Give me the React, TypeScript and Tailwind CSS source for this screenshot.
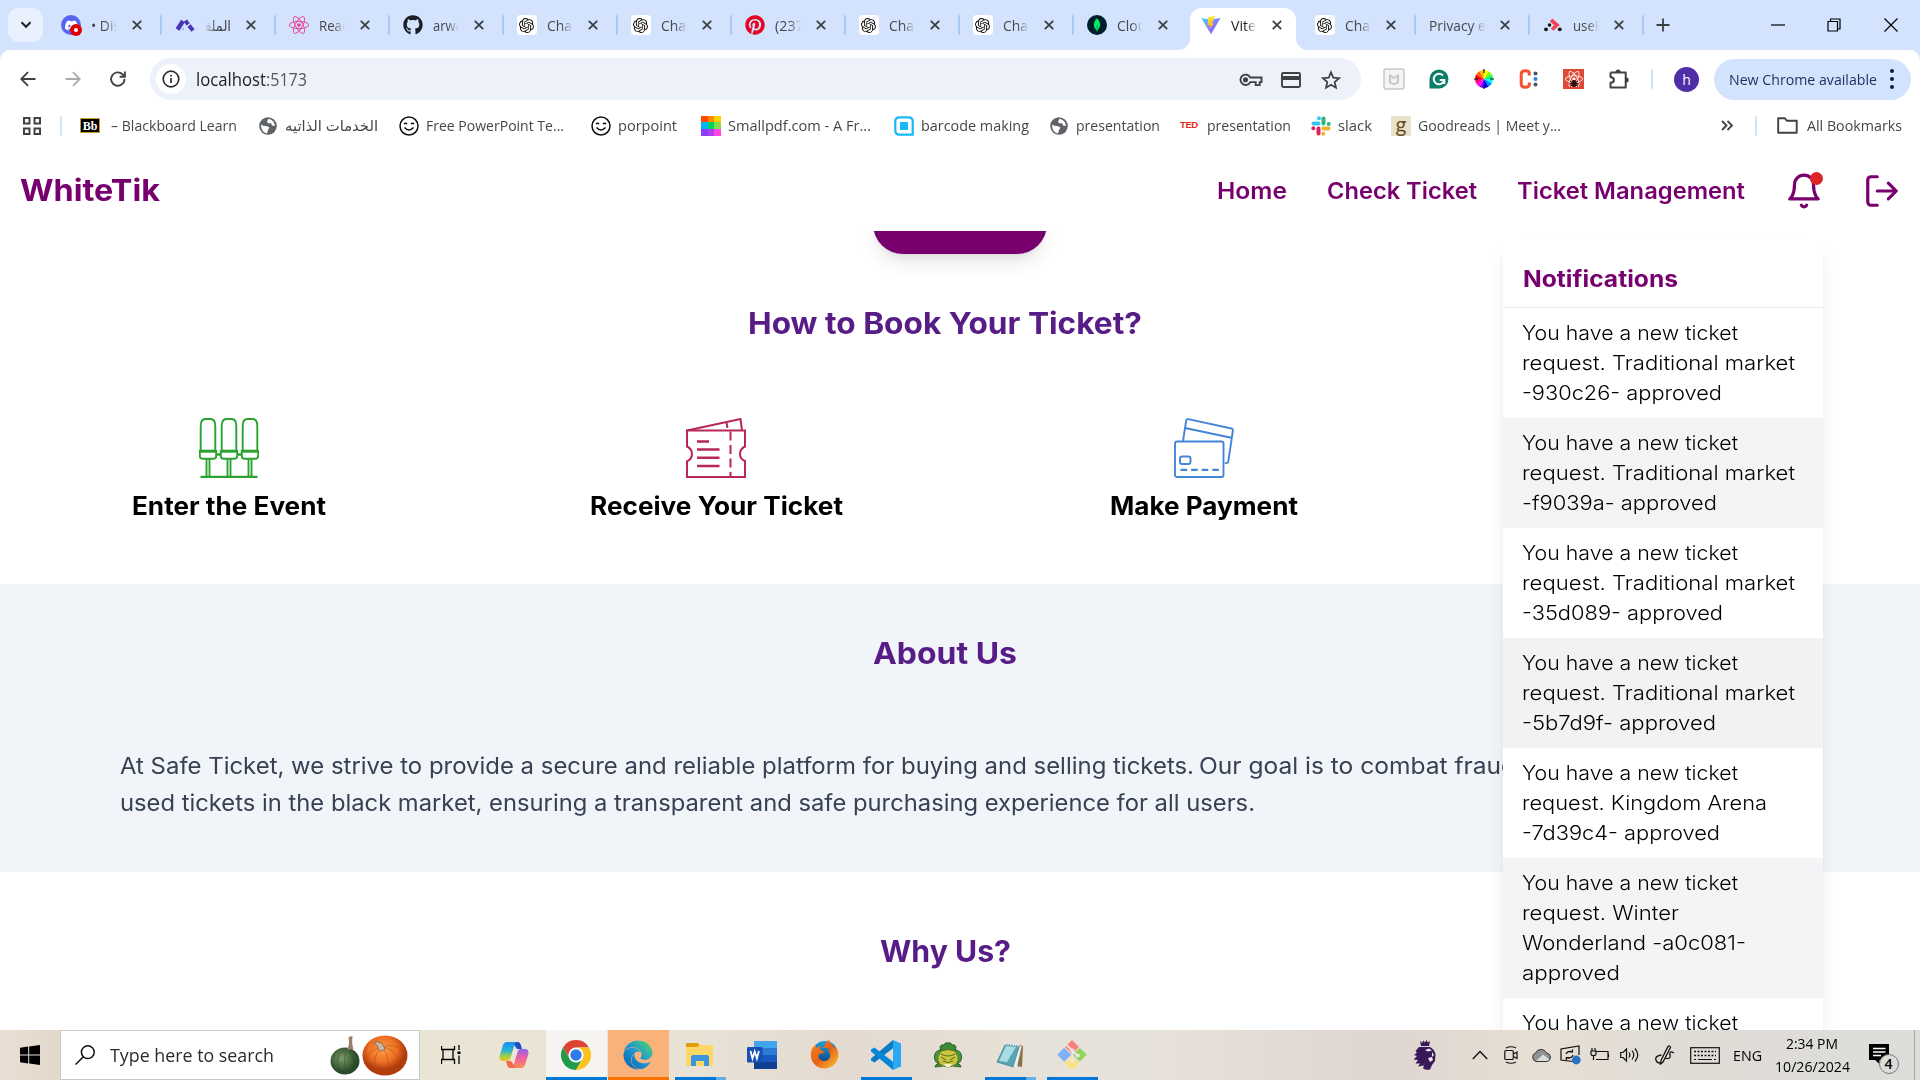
import { useLayoutEffect, useRef, useState } from "react";
import type { ReactNode } from "react";
import { SiOpenai, SiMongodb, SiDiscord } from "react-icons/si";
import { FaGithub, FaPinterest, FaReact, FaFirefoxBrowser, FaEdge } from "react-icons/fa";

/** Single line of text whose glyphs are stretched or condensed so that it spans `w` pixels. */
function Fit({ w, className = "", children }: { w: number; className?: string; children: string }) {
  const ref = useRef<HTMLSpanElement>(null);
  const [scale, setScale] = useState(1);
  useLayoutEffect(() => {
    const el = ref.current;
    if (el && el.offsetWidth > 0) {
      const natural = el.getBoundingClientRect().width / scale;
      setScale(w / natural);
    }
  }, [w, children]);
  return (
    <span className={`flex shrink-0 justify-start whitespace-nowrap [direction:ltr] ${className}`} style={{ width: w }}>
      <span ref={ref} className="block w-max shrink-0 origin-left" style={{ transform: `scaleX(${scale})` }}>
        {children}
      </span>
    </span>
  );
}

const Cross = () => (
  <svg width="10" height="10" viewBox="0 0 10 10" stroke="#3c4043" strokeWidth="1.8">
    <path d="M.8.8l8.4 8.4M9.2.8L.8 9.2" />
  </svg>
);

const Gpt = () => (
  <span className="flex h-5 w-5 items-center justify-center rounded-[4px] bg-white">
    <SiOpenai size={15} color="#111" />
  </span>
);

const ViteLogo = () => (
  <svg width="21" height="20" viewBox="0 0 21 20">
    <defs>
      <linearGradient id="va" x1="0" y1="0" x2="1" y2="1">
        <stop offset="0" stopColor="#41d1ff" />
        <stop offset="1" stopColor="#bd34fe" />
      </linearGradient>
      <linearGradient id="vb" x1="0" y1="0" x2="0" y2="1">
        <stop offset="0" stopColor="#ffea43" />
        <stop offset="1" stopColor="#ffa800" />
      </linearGradient>
    </defs>
    <path d="M.3 2.6l9.8 1.6 10.4-1.6-10 17.2z" fill="url(#va)" />
    <path d="M15 .2L7.600 1.6l-.6 9 2.700-.5-.9 4.200 5-6.200-2.500.5z" fill="url(#vb)" />
  </svg>
);

const tabs: { icon: ReactNode; text: string; kind?: string; w: number }[] = [
  {
    icon: (
      <span className="relative flex h-5 w-5 items-center justify-center rounded-full bg-[#5865f2]">
        <SiDiscord size={13} color="#fff" />
        <span className="absolute -bottom-px -right-px flex h-3 w-3 items-center justify-center rounded-full bg-[#e00000]">
          <span className="h-1 w-1 rounded-full bg-white" />
        </span>
      </span>
    ),
    text: "• Dis",
    w: 29,
  },
  {
    icon: (
      <svg width="20" height="20" viewBox="0 0 20 20">
        <path d="M2.500 14.500L8 6" stroke="#4a35b8" strokeWidth="4.500" />
        <path d="M10.500 5.500l2.500 4" stroke="#4a35b8" strokeWidth="4" />
        <path d="M14 10.500l4 5" stroke="#4a35b8" strokeWidth="4" />
        <circle cx="8" cy="14" r="1" fill="#a99be8" />
      </svg>
    ),
    text: "الملف",
    kind: "rtl",
    w: 33,
  },
  { icon: <FaReact size={20} color="#e83e8c" />, text: "React", w: 34 },
  { icon: <FaGithub size={20} color="#1b1f24" />, text: "arwaa", w: 37 },
  { icon: <Gpt />, text: "Chat", w: 30 },
  { icon: <Gpt />, text: "Chat", w: 30 },
  { icon: <FaPinterest size={20} color="#e60023" />, text: "(237)", w: 33 },
  { icon: <Gpt />, text: "Chat", w: 30 },
  { icon: <Gpt />, text: "Chat", w: 30 },
  {
    icon: (
      <span className="flex h-5 w-5 items-center justify-center rounded-full bg-[#001e2b]">
        <SiMongodb size={14} color="#00ed64" />
      </span>
    ),
    text: "Cloud",
    w: 38,
  },
  { icon: <ViteLogo />, text: "Vite", kind: "active", w: 25 },
  { icon: <Gpt />, text: "Chat", w: 30 },
  { icon: null, text: "Privacy err", kind: "wide", w: 68 },
  {
    icon: (
      <svg width="20" height="20" viewBox="0 0 20 20">
        <path d="M8 5l6 5-5 4.500" fill="none" stroke="#f44250" strokeWidth="3.600" />
        <circle cx="6.500" cy="10" r="1.800" fill="#121212" />
        <circle cx="3" cy="14.300" r="1.900" fill="#121212" />
        <circle cx="16.800" cy="14.300" r="1.900" fill="#121212" />
      </svg>
    ),
    text: "useR",
    w: 30,
  },
];

function TabStrip() {
  return (
    <div className="flex h-[50px] items-center bg-[#d3e3fd] text-[15px] text-[#45474a]">
      <div className="ml-2 flex h-[34px] w-[35px] shrink-0 items-center justify-center rounded-[11px] bg-[#e9f1fe]">
        <svg width="12" height="8" viewBox="0 0 12 8" fill="none" stroke="#1f1f1f" strokeWidth="2">
          <path d="M1.500 1.300L6 5.800l4.500-4.500" />
        </svg>
      </div>
      <div className="ml-1 flex h-full">
        {tabs.map((t, i) => {
          const active = t.kind === "active";
          const bar = i !== 9 && !active;
          return (
            <div key={i} className="relative flex h-full w-[113.98px] items-center">
              {active && (
                <>
                  <div className="absolute bottom-0 left-[3px] right-[5px] top-[8px] rounded-t-[12px] bg-white" />
                  <svg className="absolute bottom-0 -left-[9px]" width="12" height="12" viewBox="0 0 12 12">
                    <path d="M12 0v12H0A12 12 0 0 0 12 0" fill="#fff" />
                  </svg>
                  <svg className="absolute bottom-0 -right-[7px]" width="12" height="12" viewBox="0 0 12 12">
                    <path d="M0 0v12h12A12 12 0 0 1 0 0" fill="#fff" />
                  </svg>
                </>
              )}
              <div className="relative flex w-full items-center">
                {t.icon && <span className="ml-[14px] flex w-5 justify-center">{t.icon}</span>}
                <span
                  className={
                    t.kind === "wide"
                      ? "ml-[14px] flex w-[57px] overflow-hidden [mask-image:linear-gradient(to_right,black_75%,transparent)]"
                      : t.kind === "rtl"
                        ? "ml-[10px] flex w-[26px] justify-end overflow-hidden [mask-image:linear-gradient(to_left,black_55%,transparent)]"
                        : "ml-[10px] flex w-[26px] overflow-hidden [mask-image:linear-gradient(to_right,black_55%,transparent)]"
                  }
                >
                  <Fit w={t.w} className={active ? "text-[#1f1f1f]" : ""}>
                    {t.text}
                  </Fit>
                </span>
                <span className="ml-auto mr-[18.500px] flex">
                  <Cross />
                </span>
              </div>
              {bar && <div className="absolute -right-px top-[15px] h-5 w-[2px] rounded bg-[#a8c7fa]" />}
            </div>
          );
        })}
      </div>
      <svg className="ml-[13px]" width="14" height="14" viewBox="0 0 14 14" stroke="#3c4043" strokeWidth="1.800">
        <path d="M7 .5v13M.5 7h13" />
      </svg>
      <div className="ml-auto flex items-center text-black">
        <svg width="14" height="14" viewBox="0 0 14 14" stroke="#000" strokeWidth="1.200">
          <path d="M0 7h14" />
        </svg>
        <svg className="ml-[42px]" width="14" height="14" viewBox="0 0 14 14" fill="none" stroke="#000" strokeWidth="1.200">
          <path d="M1 3.500h9.500V13H1zM3.500 3.500V1H13v10h-2.500" />
        </svg>
        <svg className="ml-[43px] mr-[22px]" width="14" height="14" viewBox="0 0 14 14" stroke="#000" strokeWidth="1.200">
          <path d="M.5.5l13 13M13.500.5l-13 13" />
        </svg>
      </div>
    </div>
  );
}

function Toolbar() {
  const wheel = ["#ff0", "#8f0", "#0f6", "#0ff", "#08f", "#00f", "#80f", "#f0f", "#f06", "#f00", "#f60", "#fb0"];
  return (
    <div className="flex h-[58px] items-center rounded-t-[10px] bg-white">
      <svg className="ml-5" width="16" height="16" viewBox="0 0 16 16" fill="none" stroke="#3f4245" strokeWidth="1.800">
        <path d="M15.500 8H1.500M8 1.200L1.200 8 8 14.800" />
      </svg>
      <svg className="ml-[29px]" width="16" height="16" viewBox="0 0 16 16" fill="none" stroke="#a8abae" strokeWidth="1.800">
        <path d="M.5 8h14M8 1.200L14.800 8 8 14.800" />
      </svg>
      <svg className="ml-[28px]" width="18" height="18" viewBox="0 0 18 18" fill="none" stroke="#3f4245" strokeWidth="1.900">
        <path d="M15.500 9a6.700 6.700 0 1 1-1.900-4.600L15.800 6.600M15.900 1.500v5.300h-5.300" />
      </svg>
      <div className="ml-[23px] flex h-[42px] w-[1211px] items-center rounded-full bg-[#ecf1fa]">
        <span className="ml-[6px] flex h-[30px] w-[30px] items-center justify-center rounded-full bg-white">
          <svg width="18" height="18" viewBox="0 0 18 18" fill="none" stroke="#2b2d2f" strokeWidth="1.700">
            <circle cx="9" cy="9" r="7.800" />
            <path d="M9 8v5M9 4.800v1.700" />
          </svg>
        </span>
        <span className="ml-[10px] flex text-[17.5px] text-[#1f1f1f]">
          <Fit w={70}>localhost</Fit>
          <Fit w={41} className="text-[#55585c]">
            :5173
          </Fit>
        </span>
        <div className="ml-auto mr-[10px] flex items-center pt-px">
          <span className="flex w-10 justify-center">
            <svg width="24" height="16" viewBox="0 0 24 16" fill="none" stroke="#3f4245" strokeWidth="1.900">
              <path d="M11.300 5.500H22.500v4.600h-1.800v3h-4v-3h-5.400A5.200 5.200 0 1 1 11.300 5.500z" />
              <circle cx="6.500" cy="7.800" r="1.600" fill="#3f4245" />
            </svg>
          </span>
          <span className="flex w-10 justify-center">
            <svg width="20" height="16" viewBox="0 0 20 16">
              <rect x="1" y="1" width="18" height="14" rx="1.200" fill="none" stroke="#3f4245" strokeWidth="1.900" />
              <path d="M1 4h18v4H1z" fill="#3f4245" />
            </svg>
          </span>
          <span className="flex w-10 justify-center">
            <svg width="20" height="20" viewBox="0 0 24 24" fill="none" stroke="#3f4245" strokeWidth="2.100">
              <path d="M12 2.700l2.700 6.500 7 .6-5.300 4.600 1.600 6.900-6-3.700-6 3.700 1.600-6.900L2.300 9.800l7-.6z" />
            </svg>
          </span>
        </div>
      </div>
      <div className="ml-[10px] flex">
        <span className="flex w-[45px] items-center justify-center">
          <svg width="22" height="22" viewBox="0 0 22 22" fill="none" stroke="#c6c9cc">
            <rect x="1" y="1" width="20" height="20" rx="2" strokeWidth="1.500" fill="#f3f4f5" />
            <path d="M7 14.500V7.500l4 2.500 4-2.500v7l-4 2z" strokeWidth="2" />
          </svg>
        </span>
        <span className="flex w-[45px] items-center justify-center">
          <svg width="20" height="20" viewBox="0 0 20 20">
            <path d="M10 .5a9.500 9.500 0 1 1 0 19H.5V10A9.500 9.500 0 0 1 10 .5" fill="#0c7d68" />
            <path d="M14 6.500A5.300 5.300 0 1 0 15.200 11h-4.500M15.300 11v4" fill="none" stroke="#fff" strokeWidth="2" />
          </svg>
        </span>
        <span className="flex w-[45px] items-center justify-center">
          <svg width="20" height="20" viewBox="-10 -10 20 20">
            {wheel.map((c, i) => (
              <path key={i} d="M0 0V-9A9 9 0 0 1 4.500-7.800z" fill={c} transform={`rotate(${i * 30})`} />
            ))}
            <path d="M0-10v4M0 6v4M-10 0h4M6 0h4" stroke="#111" strokeWidth="1.200" />
          </svg>
        </span>
        <span className="flex w-[45px] items-center justify-center">
          <svg width="20" height="20" viewBox="0 0 20 20">
            <path d="M10.300 6.500V4.500Q10.300 1.800 6.300 1.800T2.200 5v10q0 3.300 4.100 3.300t4-2.900v-2" fill="none" stroke="#f4532e" strokeWidth="3" />
            <circle cx="16.500" cy="4.500" r="2" fill="#44566c" />
            <circle cx="16.500" cy="10" r="2" fill="#2f7fe0" />
            <circle cx="16.500" cy="15.500" r="2" fill="#44566c" />
          </svg>
        </span>
        <span className="flex w-[45px] items-center justify-center">
          <span className="relative flex h-5 w-[21px] items-center justify-center bg-[#df4a38]">
            <FaReact size={18} color="#fff" />
            <svg className="absolute bottom-0 left-1" width="13" height="13" viewBox="0 0 13 13">
              <ellipse cx="7" cy="7.500" rx="2.500" ry="3.600" fill="#2c1310" />
              <path d="M3 5l8 5.500M11 5l-8 5.500M2.500 7.700h9" stroke="#2c1310" />
            </svg>
          </span>
        </span>
        <span className="flex w-[45px] items-center justify-center">
          <svg width="22" height="22" viewBox="0 0 22 22">
            <path d="M2.500 4.500h15.200v5.200M17.700 12.500v7H2.500v-4.700q3.500-.3 3.500-2.800T2.500 9V4.500M17.700 8v6" fill="none" stroke="#3f4245" strokeWidth="2" strokeLinejoin="round" />
            <path d="M7.500 4.500a2.600 2.900 0 0 1 5.200 0zM17.700 9.300a3 2.700 0 0 1 0 5.400z" fill="#3f4245" />
          </svg>
        </span>
      </div>
      <div className="ml-[10px] h-5 w-[2px] rounded bg-[#d3e3fd]" />
      <div className="ml-[21px] flex h-[25px] w-[25px] items-center justify-center rounded-full bg-[#512da8] text-[14px] text-white">h</div>
      <div className="ml-[15px] flex h-[41px] w-[197px] items-center rounded-full bg-[#d3e3fd] pl-[15px] text-[15px] text-[#17305c]">
        <Fit w={148}>New Chrome available</Fit>
        <span className="ml-[13px] flex flex-col gap-[4px]">
          <i className="h-1 w-1 rounded-full bg-[#041e49]" />
          <i className="h-1 w-1 rounded-full bg-[#041e49]" />
          <i className="h-1 w-1 rounded-full bg-[#041e49]" />
        </span>
      </div>
    </div>
  );
}

const Globe = () => (
  <svg width="18" height="18" viewBox="0 0 18 18" className="shrink-0">
    <circle cx="9" cy="9" r="8.800" fill="#5f6368" />
    <path d="M2 7.500q3 2 5.500 1.500l3 1.500-1.500 2.500-1 3.500Q2 15 2 7.500M9.500 1.800L8 4.500l1.500 2 2.500-.5 1 2.500 3 .5Q15.500 3 9.500 1.800" fill="#fff" />
  </svg>
);
const Smiley = () => (
  <svg width="20" height="20" viewBox="0 0 20 20" fill="none" stroke="#111" strokeWidth="1.500" className="shrink-0">
    <circle cx="10" cy="10" r="9" />
    <path d="M5 8q1.500-1.600 3 0M12 8q1.500-1.600 3 0M5.500 11.500q4.500 5 9 0" />
  </svg>
);

function Mark({ icon, w, className, children }: { icon: ReactNode; w: number; className: string; children: string }) {
  return (
    <div className={`flex shrink-0 items-center ${className}`}>
      {icon}
      <Fit w={w}>{children}</Fit>
    </div>
  );
}

function Bookmarks() {
  const cells = ["#ff4b00", "#ff8a00", "#ffd000", "#00b8f5", "#00d25b", "#86df4a", "#8a3ffc", "#b43df2", "#ff45e8"];
  return (
    <div className="flex h-[42px] items-center bg-white pb-[7px] text-[15px] text-[#45474a]">
      <svg className="ml-[22px] shrink-0" width="20" height="20" viewBox="0 0 20 20" fill="none" stroke="#3f4245" strokeWidth="2">
        <path d="M2 2h5.500v5.500H2zM12.500 2H18v5.500h-5.500zM2 12.500h5.500V18H2zM12.500 12.500H18V18h-5.500z" />
      </svg>
      <div className="ml-[18px] h-5 w-[2px] rounded bg-[#d3e3fd]" />
      <Mark
        className="ml-[18px] gap-[11px]"
        w={126}
        icon={
          <span className="flex h-[15px] w-5 items-center justify-center border border-[#c79a2b] bg-black font-['Liberation_Serif',serif] text-[12px] font-bold leading-none text-white">
            Bb
          </span>
        }
      >
        – Blackboard Learn
      </Mark>
      <Mark className="ml-[22px] gap-2" w={93} icon={<Globe />}>
        الخدمات الذاتيه
      </Mark>
      <Mark className="ml-[21px] gap-[7px]" w={138} icon={<Smiley />}>
        Free PowerPoint Te...
      </Mark>
      <Mark className="ml-[27px] gap-[7px]" w={59} icon={<Smiley />}>
        porpoint
      </Mark>
      <Mark
        className="ml-[24px] gap-[7px]"
        w={143}
        icon={
          <span className="grid h-5 w-5 grid-cols-3">
            {cells.map((c) => (
              <i key={c} style={{ background: c }} />
            ))}
          </span>
        }
      >
        Smallpdf.com - A Fr...
      </Mark>
      <Mark
        className="ml-[23px] gap-[7px]"
        w={108}
        icon={
          <svg width="20" height="20" viewBox="0 0 20 20">
            <path d="M5 1.300h10A3.700 3.700 0 0 1 18.700 5v13.700H5A3.700 3.700 0 0 1 1.300 15V5A3.700 3.700 0 0 1 5 1.300z" fill="#fff" stroke="#14b9f5" strokeWidth="2.200" />
            <path d="M6 6h8v8H6z" fill="#14b9f5" />
          </svg>
        }
      >
        barcode making
      </Mark>
      <Mark className="ml-[21px] gap-2" w={84} icon={<Globe />}>
        presentation
      </Mark>
      <Mark
        className="ml-[20px] gap-[7px]"
        w={84}
        icon={<span className="w-5 font-['Liberation_Sans',sans-serif] text-[9.5px] font-black tracking-[-0.4px] text-[#e62b1e]">TED</span>}
      >
        presentation
      </Mark>
      <Mark
        className="ml-[20px] gap-[7px]"
        w={34}
        icon={
          <svg width="20" height="20" viewBox="0 0 20 20" strokeWidth="4" strokeLinecap="round">
            <path d="M2.500 7.500h5M8 2.300h.01" stroke="#36c5f0" />
            <path d="M12.500 2.500v5M17.700 8h.01" stroke="#2eb67d" />
            <path d="M12.500 12.500h5M12.200 17.700h.01" stroke="#ecb22e" />
            <path d="M7.500 12.500v5M2.300 12.200h.01" stroke="#e01e5a" />
          </svg>
        }
      >
        slack
      </Mark>
      <Mark
        className="ml-[19px] gap-[7px]"
        w={143}
        icon={
          <span className="flex h-5 w-5 items-center justify-center bg-[#e9e3cb] pb-1 font-['Lato',sans-serif] text-[21px] leading-none text-[#6b4a21]">
            g
          </span>
        }
      >
        Goodreads | Meet y...
      </Mark>
      <svg className="ml-auto" width="12" height="11" viewBox="0 0 12 11" fill="none" stroke="#3f4245" strokeWidth="1.800">
        <path d="M1 1l4.500 4.500L1 10M6.500 1L11 5.500 6.500 10" />
      </svg>
      <div className="ml-[22px] h-5 w-[2px] rounded bg-[#d3e3fd]" />
      <Mark
        className="ml-[20px] mr-[18px] gap-[9px]"
        w={95}
        icon={
          <svg width="21" height="17" viewBox="0 0 21 17" fill="none" stroke="#3f4245" strokeWidth="1.900">
            <path d="M1.200 1.200h6.500L10 3.800h9.700v12H1.200z" strokeLinejoin="round" />
          </svg>
        }
      >
        All Bookmarks
      </Mark>
    </div>
  );
}

const notes: { lines: [string, number][]; bg: string }[] = [
  { lines: [["You have a new ticket", 216], ["request. Traditional market", 273], ["-930c26- approved", 200]], bg: "bg-white" },
  { lines: [["You have a new ticket", 216], ["request. Traditional market", 273], ["-f9039a- approved", 195]], bg: "bg-gray-100" },
  { lines: [["You have a new ticket", 216], ["request. Traditional market", 273], ["-35d089- approved", 201]], bg: "bg-white" },
  { lines: [["You have a new ticket", 216], ["request. Traditional market", 273], ["-5b7d9f- approved", 194]], bg: "bg-[#f2f2f2]" },
  { lines: [["You have a new ticket", 216], ["request. Kingdom Arena", 245], ["-7d39c4- approved", 198]], bg: "bg-white" },
  { lines: [["You have a new ticket", 216], ["request. Winter", 157], ["Wonderland -a0c081-", 224], ["approved", 98]], bg: "bg-gray-100" },
  { lines: [["You have a new ticket", 216]], bg: "bg-white" },
];

function Notifications() {
  return (
    <div className="absolute right-[97px] top-[90px] z-20 w-[320px] rounded-[8px] bg-white pb-10 shadow-[0_12px_19px_-4px_rgba(0,0,0,0.1),0_5px_8px_-5px_rgba(0,0,0,0.1)]">
      <div className="flex h-[68px] items-center border-b border-gray-200 pl-5 pt-[11px] text-[22.5px] font-bold text-[#78006e]">
        <Fit w={155}>Notifications</Fit>
      </div>
      {notes.map((n, i) => (
        <div key={i} className={`flex flex-col items-start pb-[10px] pl-[19px] pt-[10px] text-[20px] font-light leading-[30px] text-black ${n.bg}`}>
          {n.lines.map(([t, w]) => (
            <Fit key={t} w={w}>
              {t}
            </Fit>
          ))}
        </div>
      ))}
    </div>
  );
}

const Seats = () => (
  <svg width="60" height="60" viewBox="0 0 60 60" fill="none" stroke="#2aa22e" strokeWidth="1.900">
    {[9, 30, 51].map((x) => (
      <g key={x} transform={`translate(${x} 0)`}>
        <path d="M-7.300 32V8Q-7.300 1-2.500 1h5Q7.300 1 7.300 8v24" />
        <path d="M-8.200 33.200H8.200" strokeWidth="3" />
        <path d="M-8.200 32v6q0 2.800 3 2.800H5.200q3 0 3-2.800v-6" />
        <path d="M-1.500 41v18M1.500 41v18" />
      </g>
    ))}
    <path d="M17 36.500h5M38 36.500h5" strokeWidth="2.500" />
    <path d="M1.500 59h57" strokeWidth="2.400" />
  </svg>
);

const Tickets = () => (
  <svg width="60" height="60" viewBox="0 0 60 60" fill="none" stroke="#b8265a" strokeWidth="2">
    <path d="M1 12.500h58v16q-5 2.500-5 7.500t5 7V59H1V43.500Q6 41 6 36t-5-7.500z" />
    <path d="M1 12.500L54.500 1 56 12.500M40.500 4.500l1 5.500" />
    <path d="M11 23.500h12M11 31.500h22.500M11 39.700h22.500M11 48h22.500" strokeWidth="2.600" />
    <path d="M44.500 13.500v45" strokeDasharray="9 4.500" />
  </svg>
);

const Cards = () => (
  <svg width="60" height="60" viewBox="0 0 60 60" fill="none" stroke="#4585d8" strokeWidth="1.900">
    <path d="M9 23L12.200 2.500Q12.600.8 14.300 1.200L57.500 10.500q1.600.4 1.400 2L54.300 43.500q-.4 2-3.300 1.600M11 10l47.500 10" />
    <rect x="1" y="23.500" width="48.500" height="35.500" rx="2" />
    <rect x="6" y="38.500" width="10.500" height="7.500" rx="2" />
    <path d="M6.500 51.800h38.500" strokeDasharray="6.600 4" strokeWidth="2.200" />
  </svg>
);

const H = ({ w, className, children }: { w: number; className: string; children: string }) => (
  <h2 className={`flex justify-center pr-[30px] text-[30px] font-bold leading-[45px] text-[#581c87] ${className}`}>
    <Fit w={w}>{children}</Fit>
  </h2>
);

function Page() {
  return (
    <div className="relative h-[880px] overflow-hidden bg-white font-['Inter',sans-serif]">
      <nav className="relative z-10 flex h-[81px] items-center bg-white pl-[20px] pr-[19px] text-[22.5px] font-semibold text-[#78006e]">
        <Fit w={140} className="text-[30px] font-bold">
          WhiteTik
        </Fit>
        <div className="ml-auto flex items-center gap-10">
          <Fit w={70}>Home</Fit>
          <Fit w={150}>Check Ticket</Fit>
          <Fit w={228}>Ticket Management</Fit>
          <span className="relative flex">
            <svg width="38" height="38" viewBox="0 0 24 24" fill="none" stroke="#78006e" strokeWidth="2" strokeLinecap="round" strokeLinejoin="round">
              <path d="M6 8a6 6 0 0 1 12 0c0 7 3 9 3 9H3s3-2 3-9" />
              <path d="M10.300 21a1.940 1.940 0 0 0 3.400 0" />
            </svg>
            <span className="absolute right-0 top-0 h-[13px] w-[13px] rounded-full bg-[#dc2626]" />
          </span>
          <svg width="38" height="38" viewBox="0 0 24 24" fill="none" stroke="#78006e" strokeWidth="2" strokeLinecap="round" strokeLinejoin="round">
            <path d="M9 21H5a2 2 0 0 1-2-2V5a2 2 0 0 1 2-2h4M16 17l5-5-5-5M21 12H9" />
          </svg>
        </div>
      </nav>
      <section className="h-[353px]">
        <div className="flex justify-center">
          <div className="-mt-[37px] h-[60px] w-[174px] rounded-[30px] bg-[#78006e] shadow-[0_12px_19px_-4px_rgba(0,0,0,0.1),0_5px_8px_-5px_rgba(0,0,0,0.1)]" />
        </div>
        <H w={394} className="mt-[47px]">
          How to Book Your Ticket?
        </H>
        <div className="ml-[85px] mt-[72px] grid grid-cols-[repeat(3,287.5px)] gap-x-[200px] text-[25px] font-bold leading-[35px] text-black">
          <div className="flex flex-col items-center gap-[11px]">
            <Seats />
            <Fit w={194}>Enter the Event</Fit>
          </div>
          <div className="flex flex-col items-center gap-[11px]">
            <Tickets />
            <Fit w={253}>Receive Your Ticket</Fit>
          </div>
          <div className="flex flex-col items-center gap-[11px]">
            <Cards />
            <Fit w={188}>Make Payment</Fit>
          </div>
        </div>
      </section>
      <section className="h-[288px] bg-[#f1f4f9] pt-[47px]">
        <H w={144} className="">
          About Us
        </H>
        <p className="mt-[71px] flex flex-col items-start pl-[120px] text-[22.5px] leading-[37px] text-gray-700">
          <span className="flex gap-[5px]">
            <Fit w={1074}>At Safe Ticket, we strive to provide a secure and reliable platform for buying and selling tickets.</Fit>
            <Fit w={317}>Our goal is to combat fraud</Fit>
          </span>
          <Fit w={1135}>used tickets in the black market, ensuring a transparent and safe purchasing experience for all users.</Fit>
        </p>
      </section>
      <section className="pt-[57px]">
        <H w={131} className="">
          Why Us?
        </H>
      </section>
      <Notifications />
    </div>
  );
}

const Copilot = () => (
  <svg width="30" height="28" viewBox="0 0 30 28">
    <defs>
      <linearGradient id="cpa" x1="0" y1="0" x2="0" y2="1">
        <stop offset="0" stopColor="#1a8df0" />
        <stop offset=".45" stopColor="#25b5d5" />
        <stop offset=".75" stopColor="#a4cf3f" />
        <stop offset="1" stopColor="#f2c22c" />
      </linearGradient>
      <linearGradient id="cpb" x1="0" y1="0" x2="0" y2="1">
        <stop offset="0" stopColor="#8f63f2" />
        <stop offset=".5" stopColor="#f0609c" />
        <stop offset="1" stopColor="#fb8f52" />
      </linearGradient>
    </defs>
    <path d="M13 1h6q2 0 2.700 2.500l1.300 4.500h-5z" fill="#1b50c8" />
    <path d="M8 1h9.500q-1.500.5-2.200 3L11.500 17q-.9 3-3.500 3H4Q0 20 .6 15L4 4Q5.200 1 8 1" fill="url(#cpa)" />
    <path d="M22 27h-9.500q1.500-.5 2.200-3L18.500 11q.9-3 3.500-3h4q4 0 3.400 5L26 24q-1.200 3-4 3" fill="url(#cpb)" />
    <path d="M17 27h-6q-2 0-2.700-2.500L7 20h5z" fill="#f26a4c" />
  </svg>
);
const Chrome = () => (
  <svg width="30" height="30" viewBox="-15 -15 30 30">
    <path d="M-13-7.500A15 15 0 0 1 13-7.500H0A7.500 7.500 0 0 0-6.500 3.750z" fill="#dd4436" />
    <path d="M-13-7.500A15 15 0 0 0 0 15L6.500 3.750A7.500 7.500 0 0 1-6.500 3.750z" fill="#229a4b" />
    <path d="M13-7.500A15 15 0 0 1 0 15L6.500 3.750A7.500 7.500 0 0 0 0-7.500z" fill="#fcc31e" />
    <circle r="7.200" fill="#fff" />
    <circle r="5.700" fill="#2f7bea" />
  </svg>
);
const Edge = () => (
  <span className="flex">
    <svg width="0" height="0">
      <linearGradient id="edg" x1="0" y1="1" x2="1" y2="0">
        <stop offset="0" stopColor="#0c59a4" />
        <stop offset=".5" stopColor="#1a97d5" />
        <stop offset="1" stopColor="#5bdc5f" />
      </linearGradient>
    </svg>
    <FaEdge size={30} style={{ fill: "url(#edg)" }} />
  </span>
);
const Explorer = () => (
  <svg width="28" height="24" viewBox="0 0 28 24">
    <path d="M0 1q0-1 1-1h11l2 3h-2v3H0z" fill="#dd9d06" />
    <path d="M0 4h12l2-2h13v21H0z" fill="#ffd766" />
    <path d="M5 23V14q0-2 2-2h14q2 0 2 2v9h-5v-5H10v5z" fill="#3b96dd" />
  </svg>
);
const Word = () => (
  <svg width="30" height="28" viewBox="0 0 30 28">
    <path d="M7 0h23v7H7z" fill="#41a5ee" />
    <path d="M7 7h23v7H7z" fill="#2b7cd3" />
    <path d="M7 14h23v7H7z" fill="#185abd" />
    <path d="M7 21h23v7H7z" fill="#103f91" />
    <rect y="6" width="15.500" height="15.500" rx="1.200" fill="#1651b3" />
    <path d="M3.500 10l2 7.500 2.200-7 2.200 7 2-7.500" fill="none" stroke="#fff" strokeWidth="1.800" />
  </svg>
);
const Firefox = () => (
  <span className="relative flex h-[29px] w-[29px] items-center justify-center">
    <span className="absolute left-[3px] top-[1px] h-[23px] w-[24px] rounded-full bg-[linear-gradient(#16a5dd,#123f80)]" />
    <svg width="0" height="0" className="absolute">
      <linearGradient id="ffx" x1="0" y1="0" x2="1" y2="1">
        <stop offset="0" stopColor="#f28a1c" />
        <stop offset=".5" stopColor="#e8601a" />
        <stop offset="1" stopColor="#f8c82c" />
      </linearGradient>
    </svg>
    <FaFirefoxBrowser className="relative" size={29} style={{ fill: "url(#ffx)" }} />
  </span>
);
const Code = () => (
  <svg width="30" height="30" viewBox="0 0 30 30">
    <path d="M22 0l8 3.500v23L22 30z" fill="#2aa9f2" />
    <path d="M22 0v8.200L3.500 22.500 0 20.500v-2z" fill="#0b7bc8" />
    <path d="M22 30v-8.200L3.500 7.500 0 9.500v2z" fill="#0a86d8" />
  </svg>
);
const Frog = () => (
  <svg width="30" height="30" viewBox="0 0 30 30">
    <path d="M9 10q-7 0-7.500 6T6 24q-4 0-4 3l8-1M21 10q7 0 7.500 6T24 24q4 0 4 3l-8-1" fill="#4a9a40" stroke="#2c5e25" />
    <path d="M7 7Q8 4 11 5q1-3 4-2 3-1 4 2 3-1 4 2l-1 5H8z" fill="#3d8b3a" stroke="#2c5e25" />
    <path d="M8 11q7-3 14 0l3 5q2 10-10 11Q3 26 5 16z" fill="#c8c63e" stroke="#596a20" />
    <path d="M8 14q7 4 14 0M10 21q5 3 10 0M8 17l5 3M22 17l-5 3" fill="none" stroke="#596a20" />
    <path d="M11 24h8l-2 3h-4z" fill="#f4f0d0" />
  </svg>
);
const Notepad = () => (
  <svg width="28" height="26" viewBox="0 0 28 26">
    <path d="M23 3l4 1-1 21-6-1z" fill="#8a7148" />
    <path d="M9.500 2l14 2-6 21L1 20z" fill="#58a5b4" stroke="#477e8b" strokeWidth=".8" />
    <path d="M10 4l10 1-9 15-8-1z" fill="#a8dce3" />
    <path d="M24 3.500l1.500 1L21 25l-3.500 0z" fill="#eef2f2" />
    <path d="M9 1.500l15 2" stroke="#e8eded" strokeWidth="2.500" strokeDasharray="1.500 1" />
  </svg>
);
const Git = () => (
  <svg width="30" height="30" viewBox="0 0 30 30">
    <path d="M15 0l7 7-7 7-7-7z" fill="#f8827f" />
    <path d="M7.200 7.800l7 7-7 7-7-7z" fill="#80b0fb" />
    <path d="M22.800 7.800l7 7-7 7-7-7z" fill="#8fd460" />
    <path d="M15 16l7 7-7 7-7-7z" fill="#fde27c" />
    <path d="M9.500 5l6 5.500v11M15.500 11l5 4.500" stroke="#ece7df" strokeWidth="1.700" fill="none" />
    <circle cx="15.300" cy="10.500" r="2.100" fill="#ece7df" />
    <circle cx="20.800" cy="15.500" r="2.100" fill="#ece7df" />
    <circle cx="15.300" cy="21" r="2.300" fill="#ece7df" />
  </svg>
);

const apps: { icon: ReactNode; cell?: string; under?: "full" | "edge" | "one" | "two" }[] = [
  { icon: <Chrome />, cell: "bg-[#f6f4f0]", under: "full" },
  { icon: <Edge />, cell: "bg-[#fab27b]", under: "edge" },
  { icon: <Explorer />, under: "two" },
  { icon: <Word /> },
  { icon: <Firefox /> },
  { icon: <Code />, under: "one" },
  { icon: <Frog /> },
  { icon: <Notepad />, under: "two" },
  { icon: <Git />, under: "one" },
];

const Tray = ({ className, children }: { className: string; children: ReactNode }) => (
  <span className={`flex shrink-0 items-center justify-center ${className}`}>{children}</span>
);

function Taskbar() {
  return (
    <div className="flex h-[50px] items-stretch bg-[linear-gradient(to_right,#e9dfd4_0%,#e2d8cc_3%,#ebe5d5_23%,#e9e3d6_35%,#e4dad1_44%,#e7e3da_56%,#e5dfd8_63%,#dfd5d1_72%,#e6dfd3_80%,#e0dcd6_88%,#dddddb_100%)] text-black">
      <div className="flex w-[60px] items-center justify-center">
        <svg width="20" height="20" viewBox="0 0 20 20">
          <path d="M0 2.800l8.200-1.200v7.900H0zM9.200 1.400L20 0v9.500H9.200zM0 10.500h8.200v7.900L0 17.200zM9.200 10.500H20V20L9.200 18.500z" />
        </svg>
      </div>
      <div className="flex w-[360px] items-center border border-[#c8c8c8] bg-white pl-[14px]">
        <svg width="20" height="20" viewBox="0 0 20 20" fill="none" stroke="#111" strokeWidth="1.500">
          <circle cx="12.800" cy="7.200" r="6.400" />
          <path d="M8.300 11.800L.6 19.500" />
        </svg>
        <Fit w={164} className="ml-[15px] text-[18.5px] text-[#2b2b2b]">
          Type here to search
        </Fit>
        <svg className="ml-[55px]" width="80" height="42" viewBox="0 0 80 42">
          <defs>
            <radialGradient id="pk1" cx=".4" cy=".4">
              <stop offset="0" stopColor="#7c9b62" />
              <stop offset="1" stopColor="#2b4a2c" />
            </radialGradient>
            <radialGradient id="pk2" cx=".45" cy=".35">
              <stop offset="0" stopColor="#ffa04a" />
              <stop offset=".65" stopColor="#ea6d22" />
              <stop offset="1" stopColor="#b23c0e" />
            </radialGradient>
          </defs>
          <ellipse cx="16" cy="27" rx="14.500" ry="13.500" fill="url(#pk1)" />
          <path d="M16 15q-14 10-3 25M18 15q12 10 3 25M17 15q-3 12 0 25" fill="none" stroke="#26432a" strokeWidth=".8" opacity=".5" />
          <path d="M18 16q3-5 1.500-13l4-1q-1 8 1 13z" fill="#9a7f6e" />
          <ellipse cx="56" cy="21.500" rx="22.500" ry="20" fill="url(#pk2)" />
          <path d="M52 14q-20 4-12 20M52 14q-10 10-5 25M54 14q8 10 4 27M56 13q16 6 12 23M56 12q16-2 20 9" fill="none" stroke="#b9470f" strokeWidth=".9" opacity=".6" />
          <path d="M45 9q3-3 7 0 3 2 4 6-4 4-7 0 1-3-4-6" fill="#c9b4a0" stroke="#7c563c" strokeWidth=".8" />
        </svg>
      </div>
      <div className="flex w-[62px] items-center justify-center">
        <svg width="20" height="20" viewBox="0 0 20 20" fill="none" stroke="#000" strokeWidth="1.300">
          <path d="M.5 1v3.500h13V1M2 4.500v10h10v-10M.5 19v-4.500h13V19M18 0v5M18 10.500V19" />
          <path d="M16.500 6.500h3v2.500h-3z" fill="#000" stroke="none" />
        </svg>
      </div>
      <div className="flex w-[64px] items-center justify-center">
        <Copilot />
      </div>
      {apps.map((a, i) => (
        <div key={i} className="flex w-[62px] pr-px">
          <div className={`flex w-full flex-col items-center ${a.cell ?? ""}`}>
            <div className="flex h-[47px] items-center pr-px pt-[2px]">{a.icon}</div>
            {a.under === "full" && <div className="h-[3px] w-full bg-[#0078d7]" />}
            {a.under === "edge" && <div className="h-[3px] w-full bg-[#ff7300]" />}
            {a.under === "one" && <div className="h-[3px] w-[51px] bg-[#0078d7]" />}
            {a.under === "two" && <div className="h-[3px] w-[51px] border-r-[10px] border-[#66aee6] bg-[#0078d7]" />}
          </div>
        </div>
      ))}
      <div className="ml-auto flex">
        <Tray className="w-10">
          <svg width="24" height="30" viewBox="0 0 24 30" fill="#37185a">
            <path d="M7 1l2.200 2 1-2.500L12 2.500 13.500 0l1.300 2.500L17 1l-1 5H8z" />
            <path d="M6 7h11q4 2 5.500 7l-.5 7-3 4-2 4.500q-4 1-7-1l1-3-6 1 2-3H2.500L5 20l-4.500-.5L4 16l-3-1 3-2.500L2.500 11z" />
            <path d="M12 10l4-1.500 3 2-4 1zM19 12l2 3-2 2M15 18l4-1 1 3-3 2z" fill="#efe9ec" />
          </svg>
        </Tray>
        <Tray className="ml-[19px] w-8">
          <svg width="16" height="10" viewBox="0 0 16 10" fill="none" stroke="#111" strokeWidth="1.400">
            <path d="M.8 9L8 1.500 15.200 9" />
          </svg>
        </Tray>
        <Tray className="w-[30px]">
          <svg width="14" height="18" viewBox="0 0 14 18" fill="none" stroke="#111" strokeWidth="1.200">
            <rect x=".8" y="4.500" width="8.500" height="9" rx="1" />
            <path d="M9.500 8l3.500-2v6.500l-3.500-2M2 2q5-2.500 10 0M2 16q5 2.500 10 0" />
          </svg>
        </Tray>
        <Tray className="w-[29px]">
          <svg width="20" height="14" viewBox="0 0 20 14">
            <path d="M5 13.500A4.500 4.500 0 0 1 4.500 5 6 6 0 0 1 15.500 5a4.300 4.300 0 0 1 .5 8.500z" fill="#8f9193" stroke="#333" />
            <path d="M5 13L12 6.500l6.500 5-2.500 1.500z" fill="#dcdddd" />
          </svg>
        </Tray>
        <Tray className="w-[30px]">
          <svg width="21" height="20" viewBox="0 0 21 20" fill="none" stroke="#111" strokeWidth="1.200">
            <path d="M13 16.500L1 15V4l18-3v9" />
            <path d="M6 9q1.500-3.500 6-2.500M12.500 4.500v2.500H10M13 10q-1 3.500-6 3M6.300 15v-2.500H9" />
            <circle cx="16.300" cy="15" r="4.400" fill="#2672c0" stroke="none" />
          </svg>
        </Tray>
        <Tray className="w-[30px]">
          <svg width="20" height="14" viewBox="0 0 20 14" fill="none" stroke="#111" strokeWidth="1.200">
            <path d="M6 3.500h12v8H6M18.500 6v3M2 0v3M5 0v3M1 3h5v3q0 1.500-2.500 1.500T1 6zM3.500 7.500V12" />
          </svg>
        </Tray>
        <Tray className="w-[30px]">
          <svg width="20" height="16" viewBox="0 0 20 16" fill="none" stroke="#111" strokeWidth="1.200">
            <path d="M.7 5.500H3L6.500 2v12L3 10.500H.7zM9 5.500q1.700 2.500 0 5M12 3.500q3.500 4.500 0 9M15 1.500q5.500 6.500 0 13" />
          </svg>
        </Tray>
        <Tray className="w-10">
          <svg width="20" height="20" viewBox="0 0 20 20" fill="none" stroke="#111" strokeWidth="1.300">
            <path d="M13 1.500q2-1.500 2.500 1L8 17l-2.500 2 .5-3.500zM6.500 10Q0 11 .8 14.500T5 18M10 13q6 2 5-3t4-2" />
          </svg>
        </Tray>
        <Tray className="w-10">
          <svg width="30" height="17" viewBox="0 0 30 17" fill="none" stroke="#111" strokeWidth="1.200">
            <rect x=".7" y=".7" width="28.600" height="15.600" />
            <path d="M4 4.500h22M4 8.500h22" strokeDasharray="2 1.500" strokeWidth="1.500" />
            <path d="M4 12.500h2M8 12.500h14M24 12.500h2" />
          </svg>
        </Tray>
        <Tray className="w-[46px] pr-px text-[15px]">
          <Fit w={29}>ENG</Fit>
        </Tray>
        <div className="flex w-[82px] flex-col items-center justify-center pb-[1px] text-[15px] leading-[22.5px]">
          <Fit w={52}>2:34 PM</Fit>
          <Fit w={75}>10/26/2024</Fit>
        </div>
        <Tray className="w-[58px]">
          <span className="relative -ml-[7px] -mt-[2px]">
            <svg width="20" height="20" viewBox="0 0 20 20">
              <path d="M0 0h20v16h-9.500v4L6 16H0z" />
              <path d="M4 4.500h12.500M4 8h12.500M4 11.500h8" stroke="#fff" strokeWidth="1.400" />
            </svg>
            <span className="absolute left-[10px] top-[10px] flex h-5 w-5 items-center justify-center rounded-full border border-[#777] bg-[#dcdcda] text-[14px] font-semibold leading-none">
              4
            </span>
          </span>
        </Tray>
        <div className="ml-[3px] w-[6px] border-l border-[#a9a9a7]" />
      </div>
    </div>
  );
}

export default function App() {
  return (
    <div className="flex h-[1080px] w-[1920px] flex-col overflow-hidden bg-white font-['Open_Sans','Noto_Sans','DejaVu_Sans',sans-serif]">
      <div className="bg-[#d3e3fd]">
        <TabStrip />
        <Toolbar />
      </div>
      <Bookmarks />
      <Page />
      <Taskbar />
    </div>
  );
}
